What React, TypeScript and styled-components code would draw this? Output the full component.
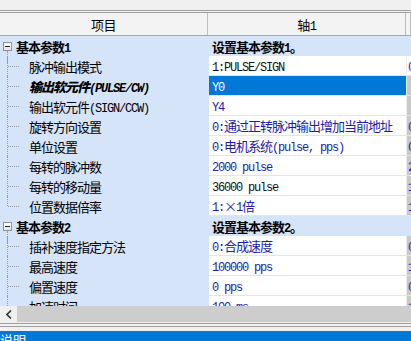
import React from "react";
import styled, { createGlobalStyle } from "styled-components";

type Tone = "blue" | "black";

interface Item {
  label: string;
  value: string;
  tone?: Tone;
  extra: string;
  extraLight?: boolean;
  selected?: boolean;
  emphasized?: boolean;
}

interface Section {
  title: string;
  desc: string;
  items: Item[];
}

const SECTIONS: Section[] = [
  {
    title: "基本参数1",
    desc: "设置基本参数1。",
    items: [
      { label: "脉冲输出模式", value: "1:PULSE/SIGN", tone: "black", extra: "0", extraLight: true },
      { label: "输出软元件(PULSE/CW)", value: "Y0", extra: "", selected: true, emphasized: true },
      { label: "输出软元件(SIGN/CCW)", value: "Y4", extra: "" },
      { label: "旋转方向设置", value: "0:通过正转脉冲输出增加当前地址", extra: "0" },
      { label: "单位设置", value: "0:电机系统(pulse, pps)", extra: "0" },
      { label: "每转的脉冲数", value: "2000 pulse", extra: "2" },
      { label: "每转的移动量", value: "36000 pulse", tone: "black", extra: "1" },
      { label: "位置数据倍率", value: "1:×1倍", extra: "1" },
    ],
  },
  {
    title: "基本参数2",
    desc: "设置基本参数2。",
    items: [
      { label: "插补速度指定方法", value: "0:合成速度", extra: "0" },
      { label: "最高速度", value: "100000 pps", extra: "1" },
      { label: "偏置速度", value: "0 pps", extra: "0" },
      { label: "加速时间", value: "100 ms", extra: "1" },
      { label: "减速时间", value: "100 ms", extra: "1" },
    ],
  },
];

const GlobalStyle = createGlobalStyle`
  html, body {
    margin: 0;
    background: #f0f0f0;
    overflow: hidden;
  }
`;

const Frame = styled.div`
  display: flex;
  flex-direction: column;
  width: 411px;
  height: 341px;
  overflow: hidden;
  background: #f0f0f0;
  font-family: "Noto Sans CJK SC", sans-serif;
  font-size: 13px;
  letter-spacing: -1px;
  color: #000;
`;

const TopBand = styled.div`
  height: 10px;
  flex: none;
`;

const Rule = styled.div`
  flex: none;
  height: 4px;
  box-sizing: border-box;
  border-top: 1px solid #a0a0a0;
  border-bottom: 1px solid #a0a0a0;
  &.top {
    height: 3px;
  }
`;

const HeaderRow = styled.div`
  flex: none;
  display: grid;
  grid-template-columns: 208px 198px 1fr;
  height: 23px;
  box-sizing: border-box;
  border-bottom: 1px solid #a8a8a8;
  background: #f3f3f3;
`;

const HeaderCell = styled.div`
  display: flex;
  align-items: center;
  justify-content: center;
  border-right: 1px solid #bcbcbc;
  font-size: 13px;
  letter-spacing: -0.5px;
  padding-top: 1px;
`;

const Body = styled.div`
  flex: none;
  height: 270px;
  overflow: hidden;
  background: #d5e4f9;
`;

const Row = styled.div`
  display: grid;
  grid-template-columns: 209px 197px 1fr;
  height: 20px;
`;

const TreeCell = styled.div<{ $section?: boolean }>`
  display: flex;
  align-items: center;
  height: 20px;
  padding-left: ${(p) => (p.$section ? 3 : 0)}px;
  gap: ${(p) => (p.$section ? 4 : 0)}px;
  white-space: nowrap;
  font-weight: ${(p) => (p.$section ? 700 : 400)};
`;

const Toggle = styled.span`
  position: relative;
  flex: none;
  width: 9px;
  height: 9px;
  box-sizing: border-box;
  border: 1px solid #939393;
  background: linear-gradient(#ffffff, #e4e4e4);
  &::before {
    content: "";
    position: absolute;
    left: 1px;
    top: 3px;
    width: 5px;
    height: 1px;
    background: #222;
  }
  &::after {
    content: "";
    position: absolute;
    left: 3px;
    top: 8px;
    height: 12px;
    border-left: 1px dotted #9a9a9a;
  }
`;

const Guide = styled.span`
  position: relative;
  flex: none;
  width: 29px;
  height: 20px;
  &::before {
    content: "";
    position: absolute;
    left: 7px;
    top: 0;
    height: 20px;
    border-left: 1px dotted #9a9a9a;
  }
  &::after {
    content: "";
    position: absolute;
    left: 8px;
    top: 10px;
    width: 11px;
    border-top: 1px dotted #9a9a9a;
  }
  &.last::before {
    height: 10px;
  }
`;

const Label = styled.span<{ $emphasized?: boolean }>`
  font-weight: ${(p) => (p.$emphasized ? 900 : 400)};
  font-style: ${(p) => (p.$emphasized ? "italic" : "normal")};
`;

const ValueCell = styled.div<{ $tone: Tone; $selected?: boolean }>`
  display: flex;
  align-items: center;
  height: 20px;
  box-sizing: border-box;
  padding-left: 3px;
  border-bottom: 1px solid #e4e4e4;
  white-space: nowrap;
  overflow: hidden;
  background: ${(p) => (p.$selected ? "#0078d7" : "#ffffff")};
  color: ${(p) => (p.$selected ? "#ffffff" : p.$tone === "black" ? "#111111" : "#1c1ca8")};
`;

const ExtraCell = styled.div<{ $light?: boolean }>`
  display: flex;
  align-items: center;
  height: 20px;
  box-sizing: border-box;
  padding-left: 1px;
  border-left: 1px solid #ececec;
  border-bottom: 1px solid #e6e6e6;
  background: ${(p) => (p.$light ? "#ffffff" : "#c9c9c9")};
  color: #1c1ca8;
  overflow: hidden;
`;

const SectionDesc = styled.div`
  grid-column: 2 / 4;
  display: flex;
  align-items: center;
  padding-left: 3px;
  font-weight: 700;
  white-space: nowrap;
`;

const TextRun = styled.span`
  white-space: nowrap;
`;

const Ascii = styled.span`
  font-family: "Liberation Mono", monospace;
  font-size: 12px;
  letter-spacing: -1.2px;
`;

const ScrollBar = styled.div`
  flex: none;
  display: flex;
  height: 16px;
`;

const ScrollButton = styled.div`
  flex: none;
  width: 17px;
  display: flex;
  align-items: center;
  justify-content: center;
  background: #f0f0f0;
`;

const ScrollTrack = styled.div`
  flex: 1;
  background: #cdcdcd;
`;

const Spacer = styled.div<{ $h: number }>`
  flex: none;
  height: ${(p) => p.$h}px;
`;

const StatusBar = styled.div`
  flex: none;
  height: 10px;
  overflow: hidden;
  background: #0078d7;
  color: #ffffff;
  font-size: 13px;
  line-height: 13px;
  letter-spacing: 0;
  padding-top: 2px;
  box-sizing: border-box;
`;

// mixed text: half-width ascii runs next to full-width CJK, like the original grid font
function Mixed({ text }: { text: string }) {
  const parts = text.split(/([\x20-\x7e]+)/).filter(Boolean);
  return (
    <TextRun>
      {parts.map((seg, i) =>
        /^[\x20-\x7e]+$/.test(seg) ? <Ascii key={i}>{seg}</Ascii> : <React.Fragment key={i}>{seg}</React.Fragment>
      )}
    </TextRun>
  );
}

function App() {
  return (
    <>
      <GlobalStyle />
      <Frame>
        <TopBand />
        <Rule className="top" />
        <HeaderRow>
          <HeaderCell>项目</HeaderCell>
          <HeaderCell>
            <Mixed text="轴1" />
          </HeaderCell>
          <HeaderCell />
        </HeaderRow>
        <Body>
          {SECTIONS.map((section) => (
            <React.Fragment key={section.title}>
              <Row>
                <TreeCell $section>
                  <Toggle />
                  <Mixed text={section.title} />
                </TreeCell>
                <SectionDesc>
                  <Mixed text={section.desc} />
                </SectionDesc>
              </Row>
              {section.items.map((item, i) => (
                <Row key={item.label}>
                  <TreeCell>
                    <Guide className={i === section.items.length - 1 ? "last" : undefined} />
                    <Label $emphasized={item.emphasized}>
                      <Mixed text={item.label} />
                    </Label>
                  </TreeCell>
                  <ValueCell $tone={item.tone ?? "blue"} $selected={item.selected}>
                    <Mixed text={item.value} />
                  </ValueCell>
                  <ExtraCell $light={item.extraLight}>
                    <Mixed text={item.extra} />
                  </ExtraCell>
                </Row>
              ))}
            </React.Fragment>
          ))}
        </Body>
        <ScrollBar>
          <ScrollButton>
            <svg width="6" height="9" viewBox="0 0 6 9">
              <path d="M5 0.5 L1 4.5 L5 8.5" fill="none" stroke="#333" strokeWidth="1.6" />
            </svg>
          </ScrollButton>
          <ScrollTrack />
        </ScrollBar>
        <Spacer $h={1} />
        <Rule />
        <Spacer $h={4} />
        <StatusBar>说明</StatusBar>
      </Frame>
    </>
  );
}

export default App;
